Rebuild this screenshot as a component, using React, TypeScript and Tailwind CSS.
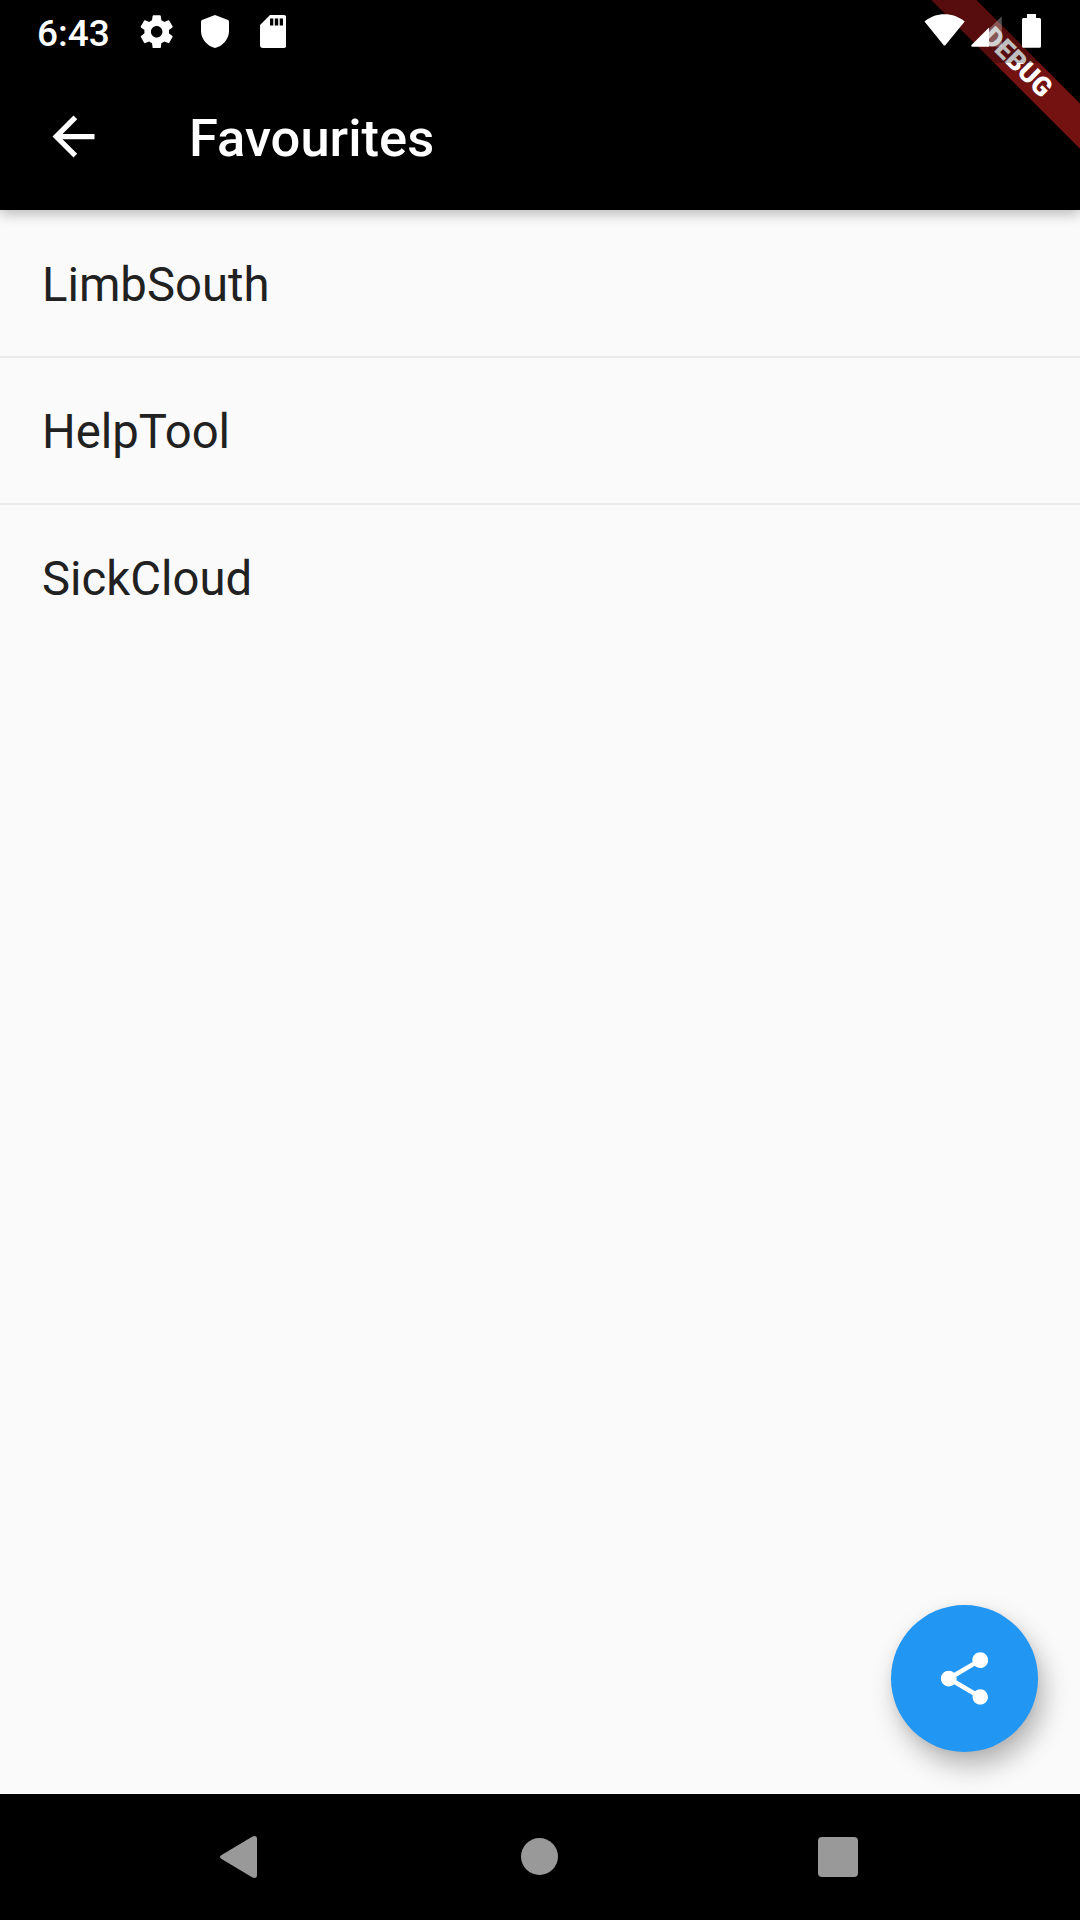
import React from 'react';

const favourites = ['LimbSouth', 'HelpTool', 'SickCloud'];

function StatusBar() {
  return (
    <div className="absolute inset-x-0 top-0 z-20 flex h-[63px] items-start justify-between bg-black/25 text-white">
      <div className="flex pl-[37px]">
        <span className="mt-3 w-[98px] text-[37px] font-medium leading-[43px]">6:43</span>
        <svg className="mt-3 ml-[2.4px] size-[39.4px]" viewBox="0 0 24 24" fill="currentColor">
          <path d="M19.43 12.98c.04-.32.07-.64.07-.98s-.03-.66-.07-.98l2.11-1.65c.19-.15.24-.42.12-.64l-2-3.46c-.12-.22-.39-.3-.61-.22l-2.49 1c-.52-.4-1.08-.73-1.69-.98l-.38-2.65C14.46 2.18 14.25 2 14 2h-4c-.25 0-.46.18-.49.42l-.38 2.65c-.61.25-1.17.59-1.69.98l-2.49-1c-.23-.09-.49 0-.61.22l-2 3.46c-.13.22-.07.49.12.64l2.11 1.65c-.04.32-.07.65-.07.98s.03.66.07.98l-2.11 1.65c-.19.15-.24.42-.12.64l2 3.46c.12.22.39.3.61.22l2.49-1c.52.4 1.08.73 1.69.98l.38 2.65c.03.24.24.42.49.42h4c.25 0 .46-.18.49-.42l.38-2.65c.61-.25 1.17-.59 1.69-.98l2.49 1c.23.09.49 0 .61-.22l2-3.46c.12-.22.07-.49-.12-.64l-2.11-1.65zM12 15.5c-1.93 0-3.5-1.57-3.5-3.5s1.57-3.5 3.5-3.5 3.5 1.57 3.5 3.5-1.57 3.5-3.5 3.5z" />
        </svg>
        <svg className="mt-[15px] ml-[24.2px] h-[33px] w-7" viewBox="0 0 28 33" fill="currentColor">
          <path d="M14 0L27 5Q28 5.500 28 6.500V16C28 24 22 31 14 33C6 31 0 24 0 16V6.500Q0 5.500 1 5Z" />
        </svg>
        <svg className="mt-[15px] ml-[31px] h-[33px] w-[26.500px]" viewBox="0 0 26.500 33" fill="currentColor">
          <path fillRule="evenodd" d="M10 0H23.500Q26.500 0 26.500 3V30Q26.500 33 23.500 33H3Q0 33 0 30V10ZM10 3.500V10.500H13.300V3.500ZM14.800 3.500V10.500H18.200V3.500ZM19.700 3.500V10.500H23V3.500Z" />
        </svg>
      </div>
      <svg className="h-[63px] w-[180px]" viewBox="0 0 180 63" fill="currentColor">
        <path d="M24.500 21.500C30 16.700 37 14.200 44.500 14.200S59 16.700 64.700 21.500L45.500 45Q44.500 46 43.500 45Z" />
        <path d="M101.800 16.200V46.800H89V28.800Z" fillOpacity="0.3" />
        <path d="M89 27.500V46.800H72Q70.500 46 71.500 45Z" />
        <path d="M127 14H136V18H139.500Q141 18 141 19.500V46.200Q141 47.700 139.500 47.700H123.500Q122 47.700 122 46.200V19.500Q122 18 123.500 18H127Z" />
      </svg>
    </div>
  );
}

function DebugBanner() {
  return (
    <div className="pointer-events-none absolute top-0 right-0 z-10 size-[160px] overflow-hidden">
      <div className="absolute top-[47.35px] left-[-8.11px] flex h-[31.5px] w-[210px] rotate-45 items-center justify-center bg-[#b71c1c]/63 text-[26.775px] leading-none font-black text-white">
        DEBUG
      </div>
    </div>
  );
}

function AppBar() {
  return (
    <header className="relative z-[1] flex h-[210px] items-center bg-black pt-[63px] pl-[42px] text-white shadow-[0_4px_12px_rgba(0,0,0,0.26)]">
      <svg className="size-[63px]" viewBox="0 0 24 24" fill="currentColor">
        <path d="M20 11H7.830l5.590-5.590L12 4l-8 8 8 8 1.410-1.410L7.830 13H20v-2z" />
      </svg>
      <h1 className="ml-[84px] pt-[2px] text-[52.5px] leading-[62px] font-medium">Favourites</h1>
    </header>
  );
}

function ShareButton() {
  return (
    <button className="absolute right-[42px] bottom-[42px] flex size-[147px] items-center justify-center rounded-full bg-[#2196f3] text-white shadow-[6px_14px_26px_rgba(0,0,0,0.28),0_2px_10px_rgba(0,0,0,0.05)]">
      <svg className="size-[63px]" viewBox="0 0 24 24" fill="currentColor">
        <path d="M18 16.080c-.76 0-1.440.3-1.960.77L8.910 12.700c.05-.23.09-.46.09-.7s-.04-.47-.09-.7l7.050-4.110c.54.5 1.250.81 2.040.81 1.660 0 3-1.340 3-3s-1.340-3-3-3-3 1.340-3 3c0 .24.04.47.09.7L8.040 9.810C7.500 9.310 6.790 9 6 9c-1.660 0-3 1.340-3 3s1.340 3 3 3c.79 0 1.500-.31 2.040-.81l7.120 4.160c-.05.21-.08.43-.08.65 0 1.610 1.310 2.920 2.920 2.920s2.920-1.310 2.920-2.920-1.310-2.920-2.920-2.920z" />
      </svg>
    </button>
  );
}

function NavigationBar() {
  return (
    <nav className="relative flex h-[126px] items-start bg-black pt-[42px] pl-[220px] text-[#999999]">
      <svg className="h-[42px] w-[37px]" viewBox="0 0 37 42" fill="currentColor">
        <path d="M1.200 19.300L32.500.5Q37-1 37 3V39Q37 43 32.500 41.500L1.200 22.700Q-1.200 21 1.200 19.300Z" />
      </svg>
      <div className="mt-[1.800px] ml-[264px] size-[37px] rounded-full bg-[#999999]" />
      <div className="mt-px ml-[260.3px] size-[39.700px] rounded-[4px] bg-[#999999]" />
    </nav>
  );
}

export default function App() {
  return (
    <div className="relative flex h-[1920px] w-[1080px] flex-col overflow-hidden bg-[#fafafa] font-['Roboto',sans-serif]">
      <AppBar />
      <main className="relative flex-1">
        <ul>
          {favourites.map((name) => (
            <li
              key={name}
              className="flex h-[147px] items-center px-[42px] pt-1 text-[47.25px] leading-[55px] text-[#212121] shadow-[0_1px_0_#ebebeb,inset_0_-1px_0_#ebebeb] last:shadow-none"
            >
              {name}
            </li>
          ))}
        </ul>
        <ShareButton />
      </main>
      <NavigationBar />
      <DebugBanner />
      <StatusBar />
    </div>
  );
}
